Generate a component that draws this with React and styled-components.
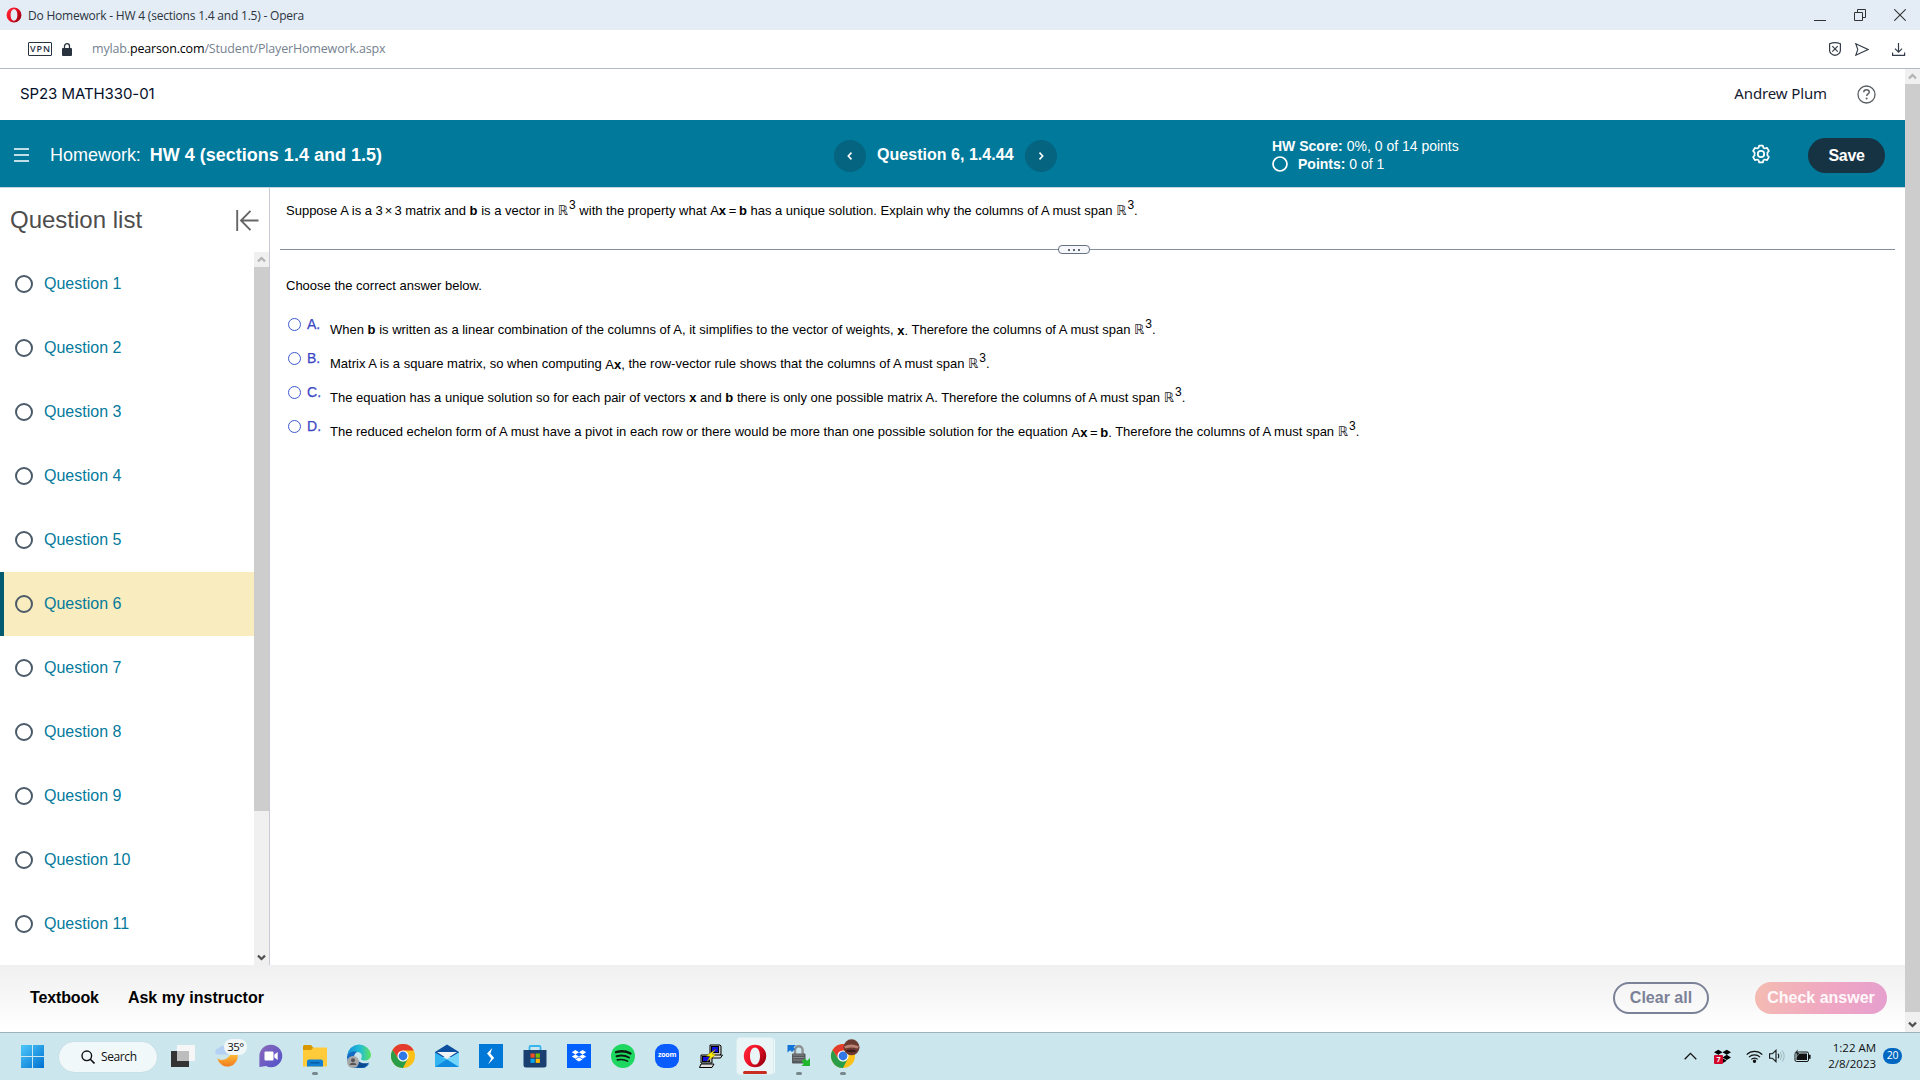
import React from "react";
import styled, { createGlobalStyle, css } from "styled-components";

const GlobalStyle = createGlobalStyle`
  *, *::before, *::after { box-sizing: border-box; }
  html, body { margin: 0; padding: 0; }
  body {
    font-family: "Liberation Sans", Arial, sans-serif;
    background: #fff;
    color: #000;
    overflow: hidden;
  }
  svg { display: block; flex: none; }
  button { font: inherit; border: 0; padding: 0; margin: 0; background: none; color: inherit; }
`;

/* ---------- window shell ---------- */

const Window = styled.div`
  width: 1920px;
  height: 1080px;
  display: flex;
  flex-direction: column;
  overflow: hidden;
  white-space: nowrap;
`;

const TitleBar = styled.header`
  height: 30px;
  flex: none;
  display: flex;
  align-items: center;
  padding: 0 14px 0 6px;
  background: #e4edf5;
`;

const WindowTitle = styled.span`
  margin-left: 6px;
  font: 12px/30px "Open Sans", "Noto Sans", sans-serif;
  letter-spacing: -0.21px;
  color: #2b3440;
  padding-top: 1px;
`;

const WindowControls = styled.div`
  margin-left: auto;
  display: flex;
  align-items: center;
  gap: 28px;
`;

const AddressBar = styled.div`
  height: 39px;
  flex: none;
  display: flex;
  align-items: center;
  padding: 0 14px 0 28px;
  background: #fff;
  border-bottom: 1px solid #afbcc9;
`;

const VpnBadge = styled.span`
  width: 24px;
  height: 14px;
  border: 1px solid #28323e;
  border-radius: 1px;
  font: 600 9px/12px "Open Sans", sans-serif;
  letter-spacing: 0.9px;
  text-align: center;
  padding-left: 1px;
  color: #28323e;
`;

const LockIcon = styled.svg`
  margin-left: 10px;
`;

const Url = styled.span`
  margin-left: 20px;
  font: 12.5px/36px "Open Sans", "Noto Sans", sans-serif;
  letter-spacing: -0.16px;
  color: #75828f;
  b { font-weight: 400; color: #000; }
`;

const AddressActions = styled.div`
  margin-left: auto;
  display: flex;
  align-items: center;
`;

const ShieldIcon = styled.svg`
  margin-right: 14px;
`;

const SendIcon = styled.svg`
  margin-right: 23px;
`;

const Viewport = styled.div`
  flex: 1;
  min-height: 0;
  display: flex;
`;

const Page = styled.div`
  flex: 1;
  min-width: 0;
  display: flex;
  flex-direction: column;
`;

/* ---------- scrollbars ---------- */

const Track = styled.div`
  width: 15px;
  flex: none;
  display: flex;
  flex-direction: column;
  background: #f0f0f0;
`;

const ArrowBox = styled.div`
  height: 15px;
  flex: none;
  display: grid;
  place-items: center;
`;

const Thumb = styled.div`
  flex: ${(p) => p.$size};
  background: #cdcdcd;
`;

const Rest = styled.div`
  flex: ${(p) => p.$size};
`;

const ScrollBar = ({ thumb, rest }) => (
  <Track>
    <ArrowBox>
      <svg width="9" height="7" viewBox="0 0 9 7"><path d="M1 5.4 4.5 2 8 5.4" fill="none" stroke="#b4b4b4" strokeWidth="2.2" /></svg>
    </ArrowBox>
    <Thumb $size={thumb} />
    <Rest $size={rest} />
    <ArrowBox>
      <svg width="9" height="7" viewBox="0 0 9 7"><path d="M1 1.6 4.5 5 8 1.6" fill="none" stroke="#505050" strokeWidth="2.2" /></svg>
    </ArrowBox>
  </Track>
);

/* ---------- page header ---------- */

const CourseBar = styled.div`
  height: 51px;
  flex: none;
  display: flex;
  align-items: center;
  padding: 0 29px 0 20px;
`;

const CourseName = styled.span`
  font: 15px/20px Inter, sans-serif;
  letter-spacing: -0.08px;
  color: #05112a;
  padding-bottom: 2px;
`;

const UserName = styled.span`
  margin-left: auto;
  margin-right: 30px;
  font: 15px/20px "Noto Sans", sans-serif;
  letter-spacing: -0.13px;
  color: #151a30;
  padding-bottom: 3px;
`;

const Banner = styled.div`
  height: 68px;
  flex: none;
  display: grid;
  grid-template-columns: 834px 438px 1fr auto;
  align-items: center;
  padding: 4px 20px 0 0;
  background: #00799b;
  border-bottom: 1px solid #c7d3e0;
  color: #fff;
`;

const BannerTitle = styled.div`
  display: flex;
  align-items: center;
  padding: 0 0 1px 14px;
  font-size: 18px;
  line-height: 24px;
`;

const HomeworkLabel = styled.span`
  margin-left: 21px;
  letter-spacing: -0.02px;
`;

const HomeworkName = styled.b`
  margin-left: 9px;
`;

const QuestionNav = styled.div`
  display: flex;
  align-items: center;
  gap: 11px;
  font-weight: 700;
  font-size: 16px;
  line-height: 18px;
  letter-spacing: 0.03px;
  span { padding-bottom: 2px; }
`;

const NavButton = styled.button`
  width: 32px;
  height: 32px;
  border-radius: 50%;
  background: #05647f;
  display: grid;
  place-items: center;
`;

const Scores = styled.div`
  font-size: 14px;
  line-height: 18px;
  padding-bottom: 1px;
`;

const ScoreLine = styled.div`
  display: flex;
  align-items: center;
  gap: ${(p) => p.$gap};
  white-space: pre;
`;

const BannerActions = styled.div`
  display: flex;
  align-items: center;
  gap: 37px;
`;

const GearIcon = styled.svg`
  margin-bottom: 3px;
`;

const SaveButton = styled.button`
  width: 77px;
  height: 35px;
  border-radius: 18px;
  background: #163344;
  font-weight: 700;
  font-size: 16px;
  letter-spacing: -0.3px;
`;

/* ---------- question list ---------- */

const Body = styled.div`
  flex: 1;
  min-height: 0;
  display: flex;
`;

const Sidebar = styled.aside`
  width: 270px;
  flex: none;
  display: flex;
  flex-direction: column;
  border-right: 1px solid #c9c9d6;
`;

const SidebarHeader = styled.div`
  height: 64px;
  flex: none;
  display: flex;
  align-items: center;
  justify-content: space-between;
  padding: 0 10px 0 10px;
  font-size: 24px;
  color: #4d4d4d;
`;

const ListArea = styled.div`
  flex: 1;
  min-height: 0;
  display: flex;
`;

const List = styled.ul`
  flex: 1;
  margin: 0;
  padding: 0;
  list-style: none;
  overflow: hidden;
`;

const ListItem = styled.li`
  height: 64px;
  display: flex;
  align-items: center;
  gap: 11px;
  padding-left: 11px;
  border-left: 4px solid transparent;
  font-size: 16px;
  line-height: 20px;
  color: #047a9c;
  ${(p) => p.$active && css`
    background: #f9ecbf;
    border-left-color: #005a70;
  `}
`;

const StatusRing = styled.i`
  width: 18px;
  height: 18px;
  flex: none;
  border: 2px solid #4b5968;
  border-radius: 50%;
`;

/* ---------- question content ---------- */

const Content = styled.main`
  flex: 1;
  min-width: 0;
  padding: 0 10px;
  font-size: 13px;
`;

const Line = styled.p`
  margin: 0;
  padding-left: 6px;
  height: 20px;
  line-height: 20px;
`;

const Prompt = styled.section`
  height: 61px;
  padding-top: 13px;
`;

const Divider = styled.div`
  height: 1px;
  background: #848f9f;
  display: flex;
  align-items: center;
  justify-content: center;
  padding-right: 27px;
`;

const DividerHandle = styled.div`
  width: 32px;
  height: 9px;
  flex: none;
  border: 1px solid #677184;
  border-radius: 4px;
  background: #f5f7fa;
  display: flex;
  align-items: center;
  justify-content: center;
  gap: 3px;
  i { width: 2px; height: 2px; background: #5f6877; }
`;

const Answers = styled.section`
  padding-top: 26px;
`;

const Options = styled.div`
  padding: 13px 0 0 8px;
`;

const Option = styled.div`
  height: 34px;
  display: flex;
  align-items: flex-start;
`;

const Radio = styled.i`
  width: 13px;
  height: 13px;
  margin-top: 9px;
  border: 1px solid #3c59cf;
  border-radius: 50%;
`;

const Letter = styled.span`
  width: 23px;
  margin: 5px 0 0 6px;
  font-size: 14px;
  line-height: 20px;
  color: #3a47c4;
  -webkit-text-stroke: 0.25px #3a47c4;
`;

const OptionText = styled.p`
  margin: 11px 0 0;
  height: 20px;
  line-height: 20px;
`;

const Reals = styled.span`
  font: 13px/0 "DejaVu Sans", sans-serif;
  color: #222;
  margin-right: 1px;
`;

const Exponent = styled.span`
  font-size: 12px;
  line-height: 0;
  vertical-align: 6px;
`;

const R3 = () => (<><Reals>ℝ</Reals><Exponent>3</Exponent></>);

const Times = styled.span`
  margin: 0 2px;
`;

const Formula = styled.span`
  word-spacing: -1px;
  line-height: 0;
  vertical-align: ${(p) => (p.$lowered ? "-1px" : "baseline")};
`;

/* ---------- page footer ---------- */

const Footer = styled.footer`
  height: 67px;
  flex: none;
  display: flex;
  align-items: center;
  padding: 0 18px 1px 30px;
  background: linear-gradient(#f0f0f0, #fff);
  font-size: 16px;
  font-weight: 700;
`;

const FooterLink = styled.a`
  margin-right: 29px;
  letter-spacing: ${(p) => p.$spacing};
  padding-bottom: 1px;
`;

const ClearButton = styled.button`
  width: 96px;
  height: 32px;
  margin-left: auto;
  margin-right: 46px;
  border: 2px solid #7b8197;
  border-radius: 16px;
  color: #7b8197;
`;

const CheckButton = styled.button`
  width: 132px;
  height: 32px;
  border-radius: 16px;
  background: linear-gradient(105deg, #f4bcb1 0%, #efa6c4 60%, #e59fce 100%);
  color: #fff8fa;
`;

/* ---------- taskbar ---------- */

const Taskbar = styled.div`
  height: 48px;
  flex: none;
  display: flex;
  align-items: center;
  background: #cbe6ed;
  border-top: 1px solid #9fb3ba;
  font-family: "Open Sans", "Noto Sans", sans-serif;
  color: #111;
`;

const StartButton = styled.div`
  width: 59px;
  padding-left: 21px;
`;

const SearchBox = styled.div`
  width: 98px;
  height: 30px;
  border-radius: 15px;
  background: #f0f8fa;
  display: flex;
  align-items: center;
  gap: 6px;
  padding-left: 22px;
  margin-right: 4px;
  box-shadow: 0 0 1px #a9c8d0;
  font-size: 12px;
  letter-spacing: -0.4px;
`;

const AppSlot = styled.div`
  position: relative;
  width: 44px;
  height: 47px;
  flex: none;
  display: grid;
  place-items: center;
  padding-bottom: 1px;
`;

const RunningMark = styled.i`
  position: absolute;
  left: 19px;
  bottom: 5px;
  width: 6px;
  height: 3px;
  border-radius: 2px;
  background: #77888c;
`;

const ActiveTile = styled.div`
  position: relative;
  width: 38px;
  height: 38px;
  border-radius: 4px;
  background: #eaf5f8;
  border: 1px solid #dbecf0;
  box-shadow: 2px 0 0 -1px #eef7f9;
  display: grid;
  place-items: center;
  &::after {
    content: "";
    position: absolute;
    left: 6px;
    bottom: 0;
    width: 24px;
    height: 3px;
    border-radius: 2px;
    background: #c92c22;
  }
`;

const Temperature = styled.span`
  position: absolute;
  left: 19px;
  top: 6px;
  width: 23px;
  height: 16px;
  border-radius: 8px;
  background: #f2f8fa;
  font-size: 11.5px;
  line-height: 15px;
  letter-spacing: -0.5px;
  text-align: center;
`;

const ZoomTile = styled.div`
  width: 24px;
  height: 24px;
  border-radius: 9px;
  background: #0b5cff;
  color: #fff;
  font: 700 7px/22px "Open Sans", sans-serif;
  letter-spacing: -0.2px;
  text-align: center;
`;

const Tray = styled.div`
  margin-left: auto;
  display: flex;
  align-items: center;
  padding: 0 18px 1px 0;
`;

const TrayItem = styled.div`
  position: relative;
  margin-right: ${(p) => p.$gap}px;
`;

const TrayCount = styled.span`
  position: absolute;
  left: 0;
  top: 6px;
  width: 9px;
  height: 9px;
  border-radius: 1px;
  background: #d4082c;
  color: #fff;
  font: 700 7px/9px "Open Sans", sans-serif;
  text-align: center;
`;

const Clock = styled.div`
  width: 65px;
  text-align: right;
  font-size: 11.5px;
  line-height: 16px;
  letter-spacing: -0.02px;
  padding-bottom: 1px;
  margin-right: 7px;
`;

const Notifications = styled.div`
  width: 19px;
  height: 16px;
  border-radius: 8px;
  background: #0067c0;
  color: #fff;
  font-size: 10.5px;
  line-height: 15px;
  letter-spacing: -0.3px;
  text-align: center;
`;

/* ---------- icons ---------- */

const OperaIcon = ({ size, id }) => (
  <svg width={size} height={size} viewBox="0 0 24 24">
    <defs>
      <linearGradient id={id} x1="0" x2="1" y1="0" y2="0.6">
        <stop offset="0" stopColor="#ff2b3c" />
        <stop offset="0.5" stopColor="#f01226" />
        <stop offset="1" stopColor="#a10213" />
      </linearGradient>
    </defs>
    <path fillRule="evenodd" fill={`url(#${id})`} d="M12 .8a11.2 11.2 0 1 1 0 22.4A11.2 11.2 0 0 1 12 .8Zm0 2.6c-3.2 0-5 3.9-5 8.6s1.8 8.6 5 8.6 5-3.9 5-8.6-1.8-8.6-5-8.6Z" />
  </svg>
);

const ChromeDisc = () => (
  <>
    <circle cx="12" cy="12" r="12" fill="#fbc116" />
    <path d="M12 6.5H22.700A12 12 0 0 0 1.600 6L7.200 14.800Z" fill="#e33b2e" />
    <path d="M1.600 6a12 12 0 0 0 10.400 18L16.800 14.700 12 17.500 7.200 14.800Z" fill="#2a9d48" />
    <circle cx="12" cy="12" r="5.600" fill="#fff" />
    <circle cx="12" cy="12" r="4.400" fill="#2f78e6" />
  </>
);

const dropboxPath = "M6 1 12 4.600 6 8.200 0 4.600ZM18 1 24 4.600 18 8.200 12 4.600ZM0 11.800 6 8.200 12 11.800 6 15.400ZM18 8.200 24 11.800 18 15.400 12 11.800ZM6 16.600 12 13 18 16.600 12 20.200Z";

const apps = [
  { name: "chat", icon: (
    <svg width="24" height="24" viewBox="0 0 24 24">
      <defs><linearGradient id="chat" x1="0" y1="0" x2="1" y2="1"><stop offset="0" stopColor="#8d67b8" /><stop offset="1" stopColor="#4f52cc" /></linearGradient></defs>
      <path d="M12 .8a11.200 11.200 0 1 1-5 21.200L.4 23V12A11.400 11.200 0 0 1 12 .8Z" fill="url(#chat)" />
      <rect x="5.500" y="7.500" width="9" height="9" rx="1" fill="#fff" /><path d="m15.300 10.500 3.400-2.400v7.800l-3.400-2.400Z" fill="#fff" />
    </svg>) },
  { name: "files", running: true, icon: (
    <svg width="24" height="24" viewBox="0 0 24 24">
      <path d="M0 2.500Q0 1 1.500 1H8l2.500 3H24v6H0Z" fill="#d99700" />
      <path d="M0 6h8l2.500-2.500H24V22.500H0Z" fill="#ffcb3a" />
      <path d="M4 22.500v-5q0-2 2-2h12q2 0 2 2v5Z" fill="#1180d4" /><path d="M7.500 18.800h9" stroke="#075a9e" strokeWidth="1.500" />
    </svg>) },
  { name: "edge", icon: (
    <svg width="24" height="24" viewBox="0 0 24 24">
      <defs><linearGradient id="edge"><stop offset="0" stopColor="#168fdc" /><stop offset=".55" stopColor="#24bfd3" /><stop offset="1" stopColor="#5de35b" /></linearGradient></defs>
      <path d="M.2 11.500A12 12 0 0 1 24 10.500c0 4-3 6-6 6-3.500 0-4.500-1.300-3.500-2.700 1.200-2.800-.8-5.800-4.500-5.800C5.500 8 1.500 10 .2 11.500Z" fill="url(#edge)" />
      <path d="M.1 12C1.500 8.500 6 6.800 10 8c-4 2-4.500 9 1 12 4 2 8 1 11.300-.5A12 12 0 0 1 .1 12Z" fill="#126bc1" />
      <path d="M10 14c1 5 7 6.500 12.300 4.500C18 24.500 11 25.500 7 21Z" fill="#0c4a8f" />
      <circle cx="6" cy="18" r="6" fill="#a8a8a8" /><circle cx="6" cy="16.200" r="2" fill="#555" /><path d="M2.500 21c.5-3 6.500-3 7 0Z" fill="#555" />
    </svg>) },
  { name: "chrome", icon: <svg width="24" height="24" viewBox="0 0 24 24"><ChromeDisc /></svg> },
  { name: "mail", icon: (
    <svg width="24" height="24" viewBox="0 0 24 24">
      <path d="M0 8 12 .5 24 8v5H0Z" fill="#0c4f9e" />
      <path d="M0 8.500 12 15.500 24 8.500V23H0Z" fill="#32b4f2" /><path d="M24 8.500V23H22L12 15.500Z" fill="#75d5fb" /><path d="M0 23 12 15.500 24 23Z" fill="#0f8be0" />
      <path d="M2 8h20L12 14.500Z" fill="#f1f3f5" />
    </svg>) },
  { name: "stream", icon: (
    <svg width="24" height="24" viewBox="0 0 24 24"><rect width="24" height="24" fill="#0078d7" />
      <path d="M13.300 4 8 9.500l4.200 5-3 5.800 6-6.200-3.800-4.600Z" fill="#fff" /></svg>) },
  { name: "store", icon: (
    <svg width="24" height="24" viewBox="0 0 24 24"><path d="M6.500 7V3.200q0-1.200 1.200-1.200h8.600q1.200 0 1.200 1.200V7" fill="none" stroke="#35b5ee" strokeWidth="1.800" />
      <path d="M.5 6h23v15q0 2.500-2.500 2.500H3Q.5 23.500.5 21Z" fill="#1b3f70" />
      <path d="M7.500 9.500h4.200v4.200H7.500Z" fill="#f25022" /><path d="M12.700 9.500h4.200v4.200h-4.200Z" fill="#7fba00" /><path d="M7.500 14.700h4.200v4.200H7.500Z" fill="#00a4ef" /><path d="M12.700 14.700h4.200v4.200h-4.200Z" fill="#ffb900" /></svg>) },
  { name: "dropbox", icon: (
    <svg width="24" height="24" viewBox="0 0 24 24"><rect width="24" height="24" fill="#0061ff" /><path transform="translate(4.800 5.500) scale(.6)" d={dropboxPath} fill="#fff" /></svg>) },
  { name: "spotify", icon: (
    <svg width="24" height="24" viewBox="0 0 24 24"><circle cx="12" cy="12" r="12" fill="#1ed760" />
      <g fill="none" stroke="#0c1a10" strokeLinecap="round"><path d="M5 8.200c5-1.500 10.500-1 14.500 1.300" strokeWidth="2.300" /><path d="M5.600 12.200c4.500-1.300 8.700-.8 12.400 1.300" strokeWidth="2" /><path d="M6.300 15.900c3.800-.9 7-.6 10.300 1.200" strokeWidth="1.600" /></g></svg>) },
  { name: "zoom", icon: <ZoomTile>zoom</ZoomTile> },
  { name: "putty", icon: (
    <svg width="24" height="24" viewBox="0 0 24 24"><g stroke="#000" strokeWidth="1">
      <path d="M11 1h10l1 1v8l-2 2h-9Z" fill="#c5c5c5" /><rect x="12.500" y="2.500" width="7" height="6" fill="#1111e0" />
      <path d="M12.500 11h11l-2 3h-9Z" fill="#ddd" />
      <path d="M2 11h10l1 1v7H2Z" fill="#c5c5c5" /><rect x="3.500" y="12.500" width="7" height="5" fill="#1111e0" />
      <path d="M2 20h13l-2 3.500H.5Z" fill="#ddd" /></g>
      <path d="m17 5-10 7 4 .5-3 5 9-7-4-.5Z" fill="#ffee00" stroke="#6a6500" strokeWidth=".4" /></svg>) },
  { name: "opera", active: true, icon: <OperaIcon size={24} id="operaTask" /> },
  { name: "vpn", running: true, icon: (
    <svg width="24" height="24" viewBox="0 0 24 24"><path d="M8 11V6a3.800 3.800 0 0 1 7.600 0V11" fill="none" stroke="#8d9294" strokeWidth="2.400" />
      <rect x="5" y="9.500" width="13.500" height="10" rx="1" fill="#55595b" /><path d="M6 11h11M6 13.500h11M6 16h11" stroke="#85898b" />
      <path d="M.5 1H9L6.500 3.300 8 5 5 8 3.200 6.200.5 8.500Z" fill="#1273d8" /><path d="M23 22h-8.500l2.300-2.300-2.300-2.200 3.200-3 2.500 2.200L23 14Z" fill="#22b52e" /></svg>) },
  { name: "chromeProfile", running: true, icon: (
    <svg width="34" height="34" viewBox="-5 -5 34 34">
      <ChromeDisc />
      <circle cx="20.500" cy="3.300" r="8" fill="#6b3a30" /><path d="M13 2.500q7-4 15 0l-1.500 2q-6-2-12 0Z" fill="#b98274" /><path d="M14 7q6-3 12 0-5 2.500-12 0Z" fill="#3c1d1b" />
    </svg>) },
];

/* ---------- data ---------- */

const questions = Array.from({ length: 11 }, (_, i) => i + 1);

const options = [
  { letter: "A", text: <>When <b>b</b> is written as a linear combination of the columns of A, it simplifies to the vector of weights, <Formula $lowered><b>x</b>.</Formula> Therefore the columns of A must span <R3 />.</> },
  { letter: "B", text: <>Matrix A is a square matrix, so when computing <Formula $lowered>A<b>x</b>,</Formula> the row-vector rule shows that the columns of A must span <R3 />.</> },
  { letter: "C", text: <>The equation has a unique solution so for each pair of vectors <b>x</b> and <b>b</b> there is only one possible matrix A. Therefore the columns of A must span <R3 />.</> },
  { letter: "D", text: <>The reduced echelon form of A must have a pivot in each row or there would be more than one possible solution for the equation <Formula $lowered>A<b>x</b> = <b>b</b>.</Formula> Therefore the columns of A must span <R3 />.</> },
];

export default function App() {
  return (
    <Window>
      <GlobalStyle />
      <TitleBar>
        <OperaIcon size={16} id="operaTitle" />
        <WindowTitle>Do Homework - HW 4 (sections 1.4 and 1.5) - Opera</WindowTitle>
        <WindowControls>
          <svg width="12" height="12" viewBox="0 0 12 12"><path d="M0 11.500h12" stroke="#333" /></svg>
          <svg width="12" height="12" viewBox="0 0 12 12"><path d="M.5 3.500h8v8h-8ZM3.500 3.500v-3h8v8h-3" fill="none" stroke="#333" /></svg>
          <svg width="12" height="12" viewBox="0 0 12 12"><path d="m.3.3 11.400 11.400M11.700.3.300 11.700" stroke="#333" strokeWidth="1.100" /></svg>
        </WindowControls>
      </TitleBar>
      <AddressBar>
        <VpnBadge>VPN</VpnBadge>
        <LockIcon width="10" height="13" viewBox="0 0 10 13"><rect y="5" width="10" height="8" rx="1" fill="#28323e" /><path d="M2.500 6V3.200a2.500 2.500 0 0 1 5 0V6" fill="none" stroke="#28323e" strokeWidth="1.300" /></LockIcon>
        <Url>mylab.<b>pearson.com</b>/Student/PlayerHomework.aspx</Url>
        <AddressActions>
          <ShieldIcon width="12" height="14" viewBox="0 0 12 14"><path d="M.6 1.800Q3.500.6 6 .6t5.400 1.200V8.500Q11 12.500 6 13.400 1 12.500.6 8.500Z" fill="none" stroke="#333c48" strokeWidth="1.200" /><path d="m3.300 4.200 5.400 5.400M8.700 4.200 3.300 9.600" stroke="#333c48" strokeWidth="1.200" /></ShieldIcon>
          <SendIcon width="14" height="13" viewBox="0 0 14 13"><path d="M.8.800 13 6.500.8 12.200 2.800 6.500Z" fill="none" stroke="#333c48" strokeWidth="1.100" /></SendIcon>
          <svg width="14" height="13" viewBox="0 0 14 13"><path d="M6.500 0v9M3 5.700 6.500 9.200l3.500-3.500M.6 9.500v2.900h12V9.500" fill="none" stroke="#333c48" strokeWidth="1.200" /></svg>
        </AddressActions>
      </AddressBar>

      <Viewport>
        <Page>
          <CourseBar>
            <CourseName>SP23 MATH330-01</CourseName>
            <UserName>Andrew Plum</UserName>
            <svg width="19" height="19" viewBox="0 0 19 19"><circle cx="9.500" cy="9.500" r="8.500" fill="none" stroke="#5a5f63" strokeWidth="1.300" /><path d="M6.700 7.300q.1-2.500 2.800-2.500t2.800 2.300c0 1.700-2.600 1.900-2.600 3.900" fill="none" stroke="#5a5f63" strokeWidth="1.400" /><circle cx="9.600" cy="13.500" r="1" fill="#5a5f63" /></svg>
          </CourseBar>

          <Banner>
            <BannerTitle>
              <svg width="15" height="14" viewBox="0 0 15 14"><path d="M0 1h15M0 7h15M0 13h15" stroke="#fff" strokeWidth="1.500" /></svg>
              <HomeworkLabel>Homework:</HomeworkLabel>
              <HomeworkName>HW 4 (sections 1.4 and 1.5)</HomeworkName>
            </BannerTitle>
            <QuestionNav>
              <NavButton aria-label="Previous"><svg width="6" height="8" viewBox="0 0 6 8"><path d="M4.500.6 1.300 4l3.200 3.400" fill="none" stroke="#fff" strokeWidth="1.600" /></svg></NavButton>
              <span>Question 6, 1.4.44</span>
              <NavButton aria-label="Next"><svg width="6" height="8" viewBox="0 0 6 8"><path d="M1.500.6 4.700 4 1.500 7.400" fill="none" stroke="#fff" strokeWidth="1.600" /></svg></NavButton>
            </QuestionNav>
            <Scores>
              <ScoreLine $gap="0"><b>HW Score:</b> 0%, 0 of 14 points</ScoreLine>
              <ScoreLine $gap="10px">
                <svg width="16" height="16" viewBox="0 0 16 16"><circle cx="8" cy="8" r="7" fill="none" stroke="#fff" strokeWidth="1.700" /></svg>
                <span><b>Points:</b> 0 of 1</span>
              </ScoreLine>
            </Scores>
            <BannerActions>
              <GearIcon width="20" height="20" viewBox="0 0 20 20" fill="none" stroke="#fff"><path strokeWidth="1.700" strokeLinejoin="round" d="M8.200 1.600h3.600l.6 2.100 1.500.8 2.200-.6 1.800 3.100-1.500 1.600v2.800l1.500 1.600-1.800 3.100-2.200-.6-1.500.8-.6 2.100H8.200l-.6-2.100-1.500-.8-2.200.6L2.100 13l1.500-1.600V8.600L2.100 7l1.800-3.100 2.200.6 1.500-.8Z" /><circle cx="10" cy="10" r="3.200" strokeWidth="1.800" /></GearIcon>
              <SaveButton>Save</SaveButton>
            </BannerActions>
          </Banner>

          <Body>
            <Sidebar>
              <SidebarHeader>
                Question list
                <svg width="23" height="21" viewBox="0 0 23 21"><path d="M1.200 0v21M22.500 10.500H5.500M14.500.8 5 10.500l9.500 9.700" fill="none" stroke="#666" strokeWidth="1.900" /></svg>
              </SidebarHeader>
              <ListArea>
                <List>
                  {questions.map((n) => (
                    <ListItem key={n} $active={n === 6}><StatusRing /><span>Question {n}</span></ListItem>
                  ))}
                </List>
                <ScrollBar thumb={544} rest={139} />
              </ListArea>
            </Sidebar>

            <Content>
              <Prompt>
                <Line>Suppose A is a 3<Times>×</Times>3 matrix and <b>b</b> is a vector in <R3 /> with the property what <Formula>A<b>x</b> = <b>b</b></Formula> has a unique solution. Explain why the columns of A must span <R3 />.</Line>
              </Prompt>
              <Divider><DividerHandle><i /><i /><i /></DividerHandle></Divider>
              <Answers>
                <Line>Choose the correct answer below.</Line>
                <Options>
                  {options.map((o) => (
                    <Option key={o.letter}>
                      <Radio />
                      <Letter>{o.letter}.</Letter>
                      <OptionText>{o.text}</OptionText>
                    </Option>
                  ))}
                </Options>
              </Answers>
            </Content>
          </Body>

          <Footer>
            <FooterLink $spacing="-0.13px">Textbook</FooterLink>
            <FooterLink $spacing="0px">Ask my instructor</FooterLink>
            <ClearButton>Clear all</ClearButton>
            <CheckButton>Check answer</CheckButton>
          </Footer>
        </Page>
        <ScrollBar thumb={928} rest={5} />
      </Viewport>

      <Taskbar>
        <StartButton>
          <svg width="23" height="23" viewBox="0 0 23 23"><defs><linearGradient id="win" x1="0" y1="0" x2="1" y2="1"><stop offset="0" stopColor="#4cc8fa" /><stop offset="1" stopColor="#0070d0" /></linearGradient></defs><path d="M0 0h11v11H0ZM12 0h11v11H12ZM0 12h11v11H0ZM12 12h11v11H12Z" fill="url(#win)" /></svg>
        </StartButton>
        <SearchBox>
          <svg width="14" height="14" viewBox="0 0 14 14"><circle cx="5.800" cy="5.800" r="4.800" fill="none" stroke="#111" strokeWidth="1.400" /><path d="m9.300 9.300 4.200 4.200" stroke="#111" strokeWidth="1.600" /></svg>
          Search
        </SearchBox>
        <AppSlot>
          <svg width="24" height="22" viewBox="0 0 24 22"><rect y="6" width="18" height="16" fill="#333" /><rect x="6" width="18" height="16" fill="#f6f6f6" /><rect x="6" y="6" width="12" height="10" fill="#bdbdbd" /></svg>
        </AppSlot>
        <AppSlot>
          <svg width="24" height="24" viewBox="0 0 24 24"><defs><linearGradient id="moon" x1="0" y1="0" x2="0" y2="1"><stop offset="0" stopColor="#ffc23d" /><stop offset="1" stopColor="#f07a1c" /></linearGradient></defs><path d="M22.500 9.500A10.300 10.500 0 0 1 2.300 14.500c4.500 3 11 1 13.500-5Z" fill="url(#moon)" /><path d="M3 10.500a3 3 0 0 1 .5-6 5 5 0 0 1 9 0 3 3 0 0 1 1 6Z" fill="#b4d0f4" /></svg>
          <Temperature>35°</Temperature>
        </AppSlot>
        {apps.map((app) => (
          <AppSlot key={app.name}>
            {app.active ? <ActiveTile>{app.icon}</ActiveTile> : app.icon}
            {app.running && <RunningMark />}
          </AppSlot>
        ))}
        <Tray>
          <TrayItem $gap={17}><svg width="13" height="8" viewBox="0 0 13 8"><path d="M.7 7.200 6.500 1.400l5.800 5.800" fill="none" stroke="#111" strokeWidth="1.300" /></svg></TrayItem>
          <TrayItem $gap={15}>
            <svg width="17" height="15" viewBox="0 0 24 21"><path d={dropboxPath} fill="#000" /></svg>
            <TrayCount>7</TrayCount>
          </TrayItem>
          <TrayItem $gap={6}><svg width="17" height="13" viewBox="0 0 17 13" fill="none" stroke="#111" strokeWidth="1.200"><path d="M.7 4.600a11 11 0 0 1 15.600 0M3 7.100a7.800 7.800 0 0 1 11 0M5.300 9.400a4.500 4.500 0 0 1 6.400 0" /><circle cx="8.500" cy="11.300" r="1.100" fill="#111" /></svg></TrayItem>
          <TrayItem $gap={8}><svg width="17" height="14" viewBox="0 0 17 14" fill="none" stroke="#111" strokeWidth="1.100"><path d="M.6 4.800h2.700L7 1.300v11.400L3.300 9.200H.6Z" /><path d="M9 4.800q1.500 2.200 0 4.400" /><path d="M11 3q3 4 0 8M13.200 1.500q4 5.500 0 11" stroke="#a3bcc2" /></svg></TrayItem>
          <TrayItem $gap={0}><svg width="17" height="14" viewBox="0 0 17 14"><rect x="1" y="3" width="13.500" height="9.500" rx="1.500" fill="none" stroke="#111" /><rect x="2.500" y="4.500" width="10.500" height="6.500" fill="#111" /><path d="M14.800 5.800h1.800v4h-1.800Z" fill="#111" /><path d="M3.800 0 .3 4.800H2.800L2 8.500 6.200 3.300H3.800Z" fill="#111" stroke="#cbe6ed" strokeWidth=".5" /></svg></TrayItem>
          <Clock>1:22 AM<br />2/8/2023</Clock>
          <Notifications>20</Notifications>
        </Tray>
      </Taskbar>
    </Window>
  );
}
